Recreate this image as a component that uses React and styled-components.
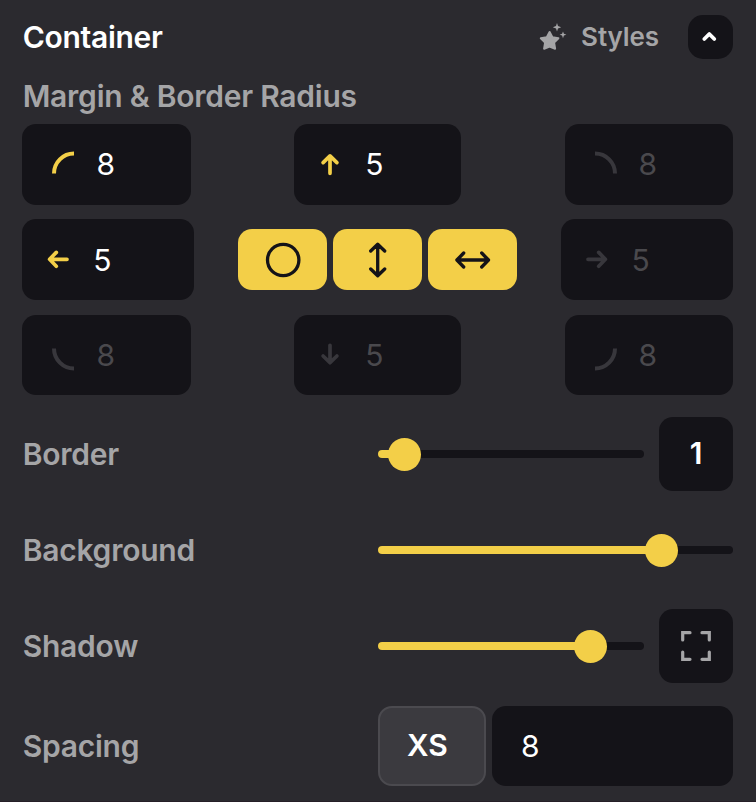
import React from "react";
import styled, { createGlobalStyle } from "styled-components";

const c = {
  panel: "#2b2a2f",
  field: "#141318",
  yellow: "#f3cf48",
  label: "#a5a5a7",
  dim: "#4a494d",
  dimIcon: "#38373c",
};

const Global = createGlobalStyle`
  *, *::before, *::after { box-sizing: border-box; }
  body { margin: 0; background: ${c.panel}; font-family: Inter, "Liberation Sans", sans-serif; }
  button, input { font-family: inherit; margin: 0; border: 0; padding: 0; }
  svg { display: block; flex: none; overflow: visible; }
`;

const Panel = styled.main`
  width: 756px;
  height: 802px;
  padding: 15px 23px 0 22px;
  background: ${c.panel};
  border-bottom: 1px solid #261f27;
  overflow: hidden;
`;

const Header = styled.header`
  display: flex;
  align-items: center;
  height: 44px;
`;

const Title = styled.h1`
  margin: 0;
  padding-left: 0.7px;
  flex: 1;
  font-size: 30px;
  line-height: 44px;
  font-weight: 600;
  letter-spacing: -0.28px;
  color: #fff;
`;

const StylesLink = styled.button`
  display: flex;
  align-items: center;
  gap: 14px;
  margin-right: 29px;
  background: none;
  color: ${c.label};
  font-size: 26px;
  line-height: 44px;
  font-weight: 600;
  letter-spacing: -0.1px;
`;

const Collapse = styled.button`
  display: grid;
  place-items: center;
  width: 45px;
  height: 44px;
  border-radius: 15px;
  background: ${c.field};
`;

const Label = styled.h2`
  margin: 0;
  padding-left: 0.7px;
  font-size: 30px;
  line-height: 40px;
  font-weight: 600;
  letter-spacing: -0.24px;
  color: ${c.label};
`;

const SectionLabel = styled(Label)`
  margin-top: 17px;
  height: 48px;
`;

const Grid = styled.div`
  display: flex;
  flex-direction: column;
`;

const GridRow = styled.div`
  display: grid;
  grid-template-columns: ${(p) => p.$cols};
  justify-content: space-between;
  align-items: center;
  height: ${(p) => p.$h}px;
  margin-bottom: ${(p) => p.$mb}px;
`;

const Field = styled.div`
  display: flex;
  align-items: center;
  height: 100%;
  padding-left: ${(p) => p.$pad}px;
  gap: ${(p) => p.$gap}px;
  border-radius: 14px;
  background: ${c.field};
  color: ${(p) => (p.$off ? c.dimIcon : c.yellow)};
`;

const Value = styled.span`
  padding-bottom: ${(p) => p.$lift || 0}px;
  font-size: 30px;
  line-height: 40px;
  font-weight: 400;
  color: ${(p) => (p.$off ? c.dim : "#fff")};
`;

const Links = styled.div`
  display: flex;
  gap: 6px;
`;

const LinkButton = styled.button`
  display: grid;
  place-items: center;
  width: 89px;
  height: 61px;
  border-radius: 14px;
  background: ${c.yellow};
  color: ${c.field};
`;

const Row = styled.section`
  display: grid;
  grid-template-columns: 356px 1fr;
  align-items: center;
  height: ${(p) => p.$h}px;
  margin-top: ${(p) => p.$mt}px;
`;

const Control = styled.div`
  display: flex;
  align-items: center;
  gap: ${(p) => p.$gap || 15}px;
  height: 100%;
`;

const Track = styled.div`
  display: flex;
  align-items: center;
  flex: 1;
  height: 8px;
  border-radius: 4px;
  background: ${c.field};
`;

const Fill = styled.div`
  height: 8px;
  border-radius: 4px 0 0 4px;
  background: ${c.yellow};
`;

const Knob = styled.div`
  flex: none;
  width: 33px;
  height: 33px;
  margin-left: -16.8px;
  border-radius: 50%;
  background: ${c.yellow};
`;

const Square = styled.div`
  display: grid;
  place-items: center;
  width: 74px;
  height: 74px;
  padding-bottom: ${(p) => p.$lift || 0}px;
  border-radius: 14px;
  background: ${c.field};
  color: #fff;
  font-size: 30px;
  line-height: 40px;
  font-weight: 600;
`;

const Preset = styled.button`
  width: 108px;
  height: 80px;
  padding: 0 9px 2px 0;
  border: 2px solid #4b4a4f;
  border-radius: 14px;
  background: #3b3a3f;
  color: #fff;
  font-size: 30px;
  font-weight: 600;
  line-height: 40px;
`;

const SpacingField = styled(Field)`
  flex: 1;
`;

const arcTurn = { tl: 0, tr: 90, br: 180, bl: 270 };

function Arc({ corner }) {
  const dy = corner[0] === "t" ? -2.5 : 4.5;
  return (
    <svg width="22" height="22" viewBox={`0 ${-dy} 22 22`} fill="none" stroke="currentColor" strokeWidth="4">
      <path d="M2 22A20 20 0 0 1 22 2" transform={`rotate(${arcTurn[corner]} 11 11)`} />
    </svg>
  );
}

const arrowPaths = {
  up: "M11 20V3M4.1 9.3L11 2.6L17.9 9.3",
  down: "M11 2V19M4.1 12.7L11 19.4L17.9 12.7",
  left: "M20 11H3M9.3 4.1L2.6 11L9.3 17.9",
  right: "M2 11H19M12.7 4.1L19.4 11L12.7 17.9",
};

function Arrow({ dir }) {
  return (
    <svg width="22" height="22" viewBox="0 0.7 22 22" fill="none" stroke="currentColor" strokeWidth="3.7" strokeLinecap="round" strokeLinejoin="round">
      <path d={arrowPaths[dir]} />
    </svg>
  );
}

function LinkIcon({ kind }) {
  return (
    <svg width="36" height="36" viewBox="0.3 0 36 36" fill="none" stroke="currentColor" strokeWidth="3.3" strokeLinecap="round" strokeLinejoin="round">
      {kind === "circle" && <circle cx="18.5" cy="18" r="15.7" />}
      {kind === "vertical" && <path d="M18 2.5V33.5M11 9L18 2.2L25 9M11 27L18 33.8L25 27" />}
      {kind === "horizontal" && <path d="M2.5 18H33.5M9 11L2.2 18L9 25M27 11L33.8 18L27 25" />}
    </svg>
  );
}

function StarIcon() {
  return (
    <svg width="28" height="28" viewBox="0 0 28 28" fill="currentColor">
      <path
        d="M10.6 9L13.4 14.2L19.4 15.2L15.1 19.6L16.1 25.7L10.6 23.6L5.1 25.7L6.1 19.6L1.8 15.2L7.8 14.2Z"
        stroke="currentColor"
        strokeWidth="2"
        strokeLinejoin="round"
      />
      <path d="M18 0L19 3L22.2 4.2L19 5.4L18 8.4L17 5.4L13.8 4.2L17 3Z" />
      <path d="M24 8.4L24.9 10.8L27.4 11.7L24.9 12.6L24 15.2L23.1 12.6L20.6 11.7L23.1 10.8Z" />
    </svg>
  );
}

function Chevron() {
  return (
    <svg width="16" height="12" viewBox="0 0 16 12" fill="none" stroke="#fff" strokeWidth="3.8" strokeLinecap="round" strokeLinejoin="round">
      <path d="M1.3 8L6.3 3L11.3 8" />
    </svg>
  );
}

function Frame() {
  return (
    <svg width="30" height="30" viewBox="0 0 30 30" fill="none" stroke={c.label} strokeWidth="3.2" strokeLinecap="round" strokeLinejoin="miter">
      <path d="M9 1.7H1.7V9M21 1.7H28.3V9M1.7 21V28.3H9M28.3 21V28.3H21" />
    </svg>
  );
}

function Corner({ corner, off, pad = 30, gap = 22, lift }) {
  return (
    <Field $pad={pad} $gap={gap} $off={off}>
      <Arc corner={corner} />
      <Value $off={off} $lift={lift}>8</Value>
    </Field>
  );
}

function Side({ dir, off, pad, gap, lift }) {
  return (
    <Field $pad={pad} $gap={gap} $off={off}>
      <Arrow dir={dir} />
      <Value $off={off} $lift={lift}>5</Value>
    </Field>
  );
}

function Slider({ at }) {
  return (
    <Track>
      <Fill style={{ width: `${at}%` }} />
      <Knob />
    </Track>
  );
}

const outerCols = "169px 103px 167px 104px 168px";

const OuterRow = styled(GridRow)`
  grid-template-columns: ${outerCols};
  & > :nth-child(2) { grid-column: 3; }
  & > :nth-child(3) { grid-column: 5; }
`;

export default function App() {
  return (
    <>
      <Global />
      <Panel>
        <Header>
          <Title>Container</Title>
          <StylesLink>
            <StarIcon />
            Styles
          </StylesLink>
          <Collapse aria-label="Collapse">
            <Chevron />
          </Collapse>
        </Header>
        <SectionLabel>Margin &amp; Border Radius</SectionLabel>
        <Grid>
          <OuterRow $h={81} $mb={14}>
            <Corner corner="tl" lift={1.5} gap={22.4} />
            <Side dir="up" pad={24.7} gap={24.6} lift={1.5} />
            <Corner corner="tr" off pad={29.5} gap={22} lift={1.5} />
          </OuterRow>
          <GridRow $h={81} $mb={15} $cols="172px 279px 172px">
            <Side dir="left" pad={24.8} gap={24.5} />
            <Links>
              <LinkButton aria-label="Link all">
                <LinkIcon kind="circle" />
              </LinkButton>
              <LinkButton aria-label="Link vertical">
                <LinkIcon kind="vertical" />
              </LinkButton>
              <LinkButton aria-label="Link horizontal">
                <LinkIcon kind="horizontal" />
              </LinkButton>
            </Links>
            <Side dir="right" pad={25} gap={23.5} off />
          </GridRow>
          <OuterRow $h={80} $mb={0}>
            <Corner corner="bl" off gap={22.4} />
            <Side dir="down" pad={24.7} gap={24.6} off />
            <Corner corner="br" off pad={29.5} gap={22} />
          </OuterRow>
        </Grid>
        <Row $h={74} $mt={22}>
          <Label>Border</Label>
          <Control>
            <Slider at={10} />
            <Square $lift={2}>1</Square>
          </Control>
        </Row>
        <Row $h={74} $mt={22}>
          <Label>Background</Label>
          <Control>
            <Slider at={80} />
          </Control>
        </Row>
        <Row $h={74} $mt={22}>
          <Label>Shadow</Label>
          <Control>
            <Slider at={80} />
            <Square>
              <Frame />
            </Square>
          </Control>
        </Row>
        <Row $h={80} $mt={23}>
          <Label>Spacing</Label>
          <Control $gap={6}>
            <Preset>XS</Preset>
            <SpacingField $pad={29}>
              <Value>8</Value>
            </SpacingField>
          </Control>
        </Row>
      </Panel>
    </>
  );
}
